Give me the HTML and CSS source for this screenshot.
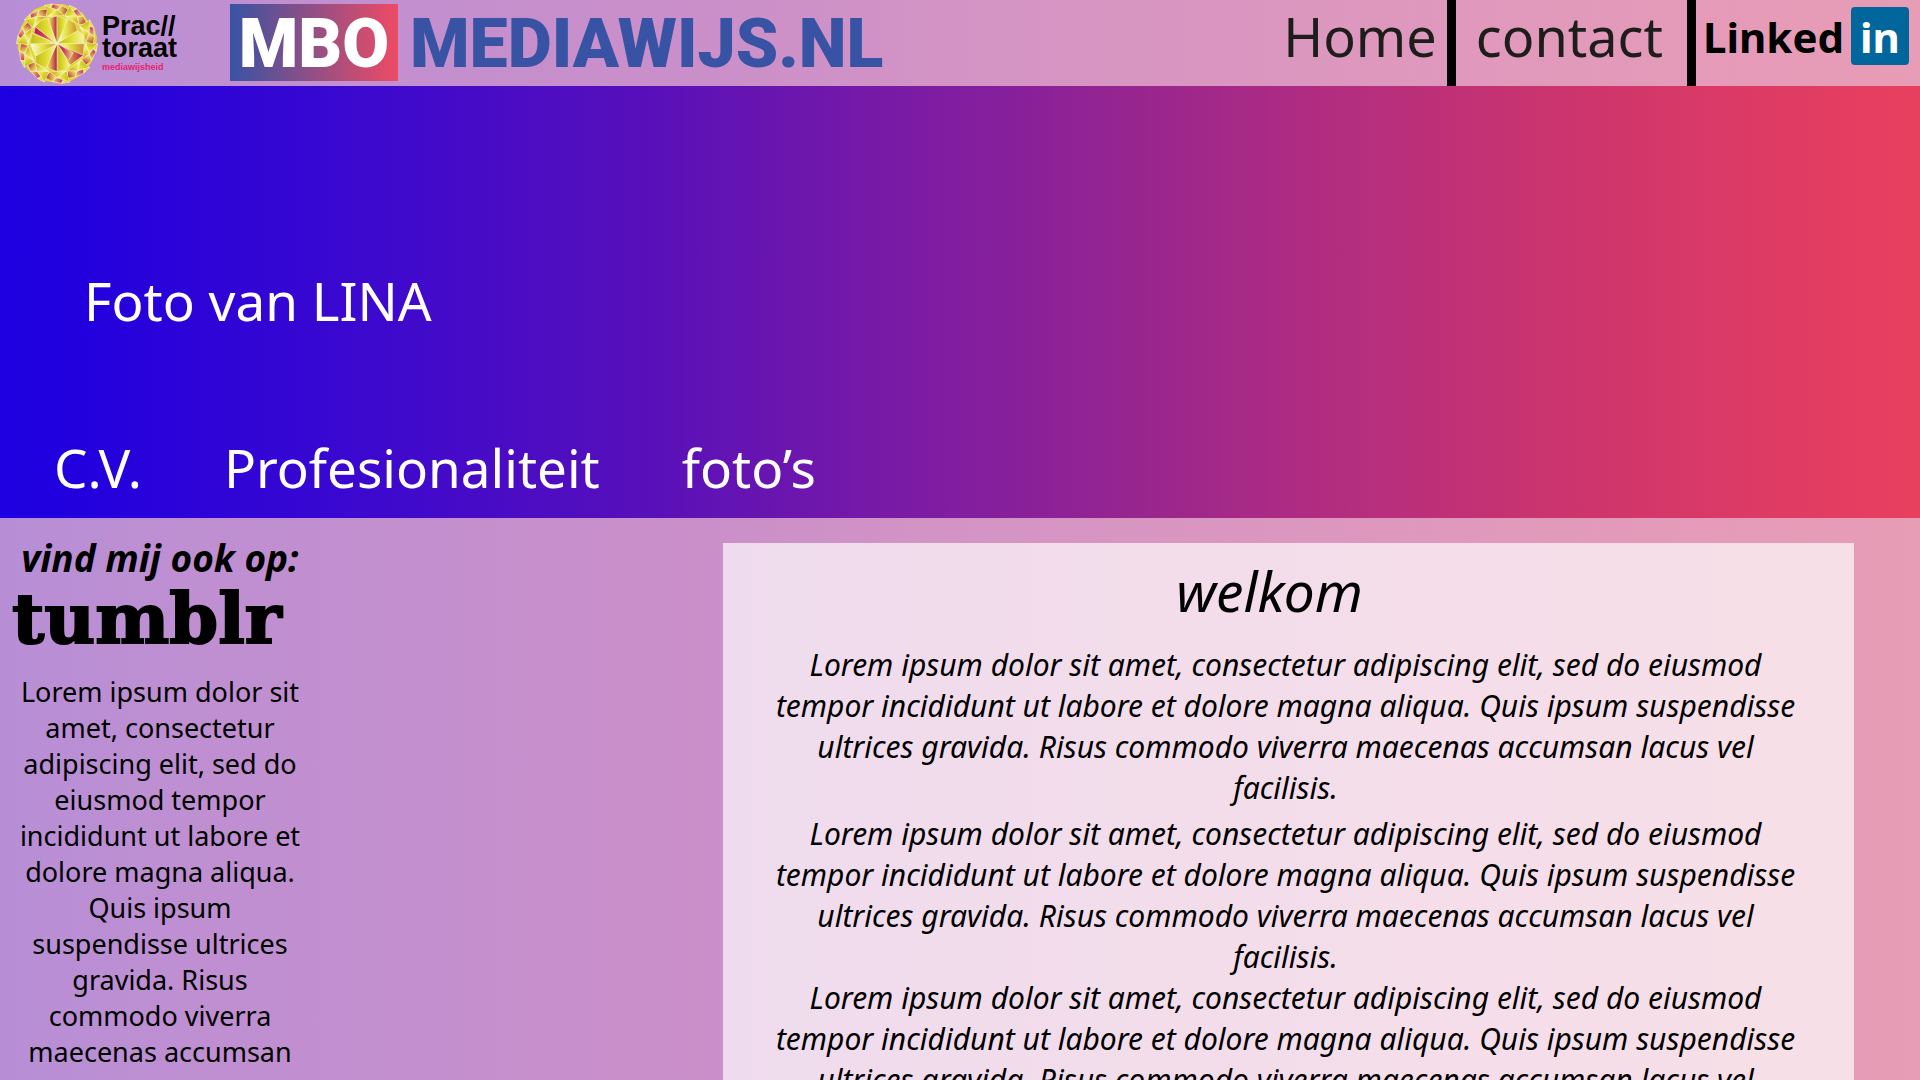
FILE: index.html
```html
<!DOCTYPE html>
<html lang="nl">
<head>
<meta charset="utf-8">
<meta name="viewport" content="width=device-width, initial-scale=1">
<title>MBO Mediawijs</title>
<link rel="stylesheet" href="styles.css">
</head>
<body>
<header class="topbar">
  <a class="practoraat" href="#">
    <svg class="ball" viewBox="0 0 258 258" aria-hidden="true">
      <defs>
        <linearGradient id="gold" x1="0" x2="1"><stop offset="0" stop-color="#c4b81e"/><stop offset=".5" stop-color="#dedb2e"/><stop offset="1" stop-color="#f8f3a8"/></linearGradient>
        <linearGradient id="pale" x1="0" x2="1"><stop offset="0" stop-color="#fffbe0"/><stop offset=".5" stop-color="#e2de3a"/><stop offset="1" stop-color="#cf8a3a"/></linearGradient>
        <linearGradient id="mix" x1="0" x2="1"><stop offset="0" stop-color="#f3ee9a"/><stop offset=".4" stop-color="#dcb040"/><stop offset="1" stop-color="#b8105f"/></linearGradient>
        <linearGradient id="rose" x1="0" x2="1"><stop offset="0" stop-color="#c0125f"/><stop offset=".4" stop-color="#c83a5c"/><stop offset="1" stop-color="#f0dc80"/></linearGradient>
        <g id="rim">
          <path fill="url(#gold)" d="M100 50 92 16 129 29z"/>
          <path fill="url(#rose)" d="M92 16 116 12 145 18 129 29z"/>
          <path fill="url(#pale)" d="M100 50 129 29 150 46z"/>
          <path fill="url(#mix)" d="M129 29 145 18 166 30 150 46z"/>
          <path fill="url(#gold)" d="M92 16 116 12 110 24z"/>
        </g>
      </defs>
      <path fill="#dcd736" d="M92 16 116 11 150 13 180 24 207 40 220 60 241 82 249 112 246 142 238 176 219 208 190 232 164 247 132 250 98 244 66 230 42 210 22 178 11 145 12 110 22 78 40 50 62 28z"/>
      <g stroke="#f9f5c0" stroke-width="1.5" stroke-linejoin="round">
        <use href="#rim"/>
        <use href="#rim" transform="rotate(36 129 131)"/>
        <use href="#rim" transform="rotate(72 129 131)"/>
        <use href="#rim" transform="rotate(108 129 131)"/>
        <use href="#rim" transform="rotate(144 129 131)"/>
        <use href="#rim" transform="rotate(180 129 131)"/>
        <use href="#rim" transform="rotate(216 129 131)"/>
        <use href="#rim" transform="rotate(252 129 131)"/>
        <use href="#rim" transform="rotate(288 129 131)"/>
        <use href="#rim" transform="rotate(324 129 131)"/>
        <path fill="url(#mix)" d="M129 131 101 56 129 48z"/>
        <path fill="url(#gold)" d="M129 131 129 48 162 58z"/>
        <path fill="url(#pale)" d="M129 131 162 58 184 70 190 92z"/>
        <path fill="url(#gold)" d="M129 131 190 92 208 104 210 131z"/>
        <path fill="url(#pale)" d="M129 131 210 131 208 166z"/>
        <path fill="url(#mix)" d="M129 131 208 166 168 196z"/>
        <path fill="url(#rose)" d="M129 131 178 158 164 182z"/>
        <path fill="url(#gold)" d="M129 131 168 196 160 208 129 214z"/>
        <path fill="url(#mix)" d="M129 131 129 214 96 204z"/>
        <path fill="url(#gold)" d="M129 131 96 204 66 190 64 168z"/>
        <path fill="url(#pale)" d="M129 131 64 168 48 131z"/>
        <path fill="url(#gold)" d="M129 131 48 131 54 100z"/>
        <path fill="url(#rose)" d="M129 131 60 100 64 80z"/>
        <path fill="url(#gold)" d="M129 131 64 80 80 62 101 56z"/>
      </g>
    </svg>
    <span class="practoraat-text">
      <span class="practoraat-name">Prac//<br>toraat</span>
      <span class="practoraat-sub">mediawijsheid</span>
    </span>
  </a>
  <a class="mediawijs" href="#"><span class="mbo">MBO</span><span class="site">MEDIAWIJS.NL</span></a>
  <nav class="menu">
    <a class="menu-home" href="#">Home</a>
    <a class="menu-contact" href="#">contact</a>
    <a class="linkedin" href="#">Linked<span class="in">in</span></a>
  </nav>
</header>
<section class="hero">
  <h1 class="hero-title">Foto van LINA</h1>
  <nav class="tabs">
    <a href="#">C.V.</a>
    <a href="#">Profesionaliteit</a>
    <a href="#">foto’s</a>
  </nav>
</section>
<main class="content">
  <aside class="sidebar">
    <h2 class="find">vind mij ook op:</h2>
    <a class="tumblr" href="#">tumblr</a>
    <p class="about">Lorem ipsum dolor sit<br>amet, consectetur<br>adipiscing elit, sed do<br>eiusmod tempor<br>incididunt ut labore et<br>dolore magna aliqua.<br>Quis ipsum<br>suspendisse ultrices<br>gravida. Risus<br>commodo viverra<br>maecenas accumsan</p>
  </aside>
  <article class="panel">
    <h2 class="welcome">welkom</h2>
    <p>Lorem ipsum dolor sit amet, consectetur adipiscing elit, sed do eiusmod<br>tempor incididunt ut labore et dolore magna aliqua. Quis ipsum suspendisse<br>ultrices gravida. Risus commodo viverra maecenas accumsan lacus vel<br>facilisis.</p>
    <p>Lorem ipsum dolor sit amet, consectetur adipiscing elit, sed do eiusmod<br>tempor incididunt ut labore et dolore magna aliqua. Quis ipsum suspendisse<br>ultrices gravida. Risus commodo viverra maecenas accumsan lacus vel<br>facilisis.</p>
    <p>Lorem ipsum dolor sit amet, consectetur adipiscing elit, sed do eiusmod<br>tempor incididunt ut labore et dolore magna aliqua. Quis ipsum suspendisse<br>ultrices gravida. Risus commodo viverra maecenas accumsan lacus vel</p>
  </article>
</main>
</body>
</html>
```
FILE: styles.css
```css
* { box-sizing: border-box; }

body {
  margin: 0;
  height: 100vh;
  overflow: hidden;
  display: flex;
  flex-direction: column;
  font-family: "Noto Sans", "Open Sans", sans-serif;
  color: #000;
  background: linear-gradient(90deg, #b78ed6 0%, #be8fd2 9%, #c98fca 35%, #d293c5 48%, #de98be 72%, #e59bb8 90%, #e79db5 100%);
}

a { color: inherit; text-decoration: none; }
h1, h2, p { margin: 0; font-weight: 400; }

.topbar {
  display: flex;
  flex: none;
  height: 86px;
}

.practoraat {
  display: flex;
  width: 230px;
  padding-left: 14px;
}
.ball { width: 86px; height: 86px; flex: none; }
.practoraat-text {
  display: flex;
  flex-direction: column;
  padding: 15px 0 0 2px;
  font-family: "Liberation Sans", Arial, sans-serif;
  font-weight: 700;
}
.practoraat-name { font-size: 27px; line-height: 22px; }
.practoraat-sub { font-size: 9px; line-height: 16px; color: #e5246f; }

.mediawijs {
  display: flex;
  height: 77px;
  margin-top: 4px;
  gap: 12px;
  font-family: Roboto, sans-serif;
  font-weight: 900;
  font-size: 68px;
  line-height: 80px;
  color: #3853a4;
}
.mbo {
  width: 168px;
  text-align: center;
  color: #fff;
  background: linear-gradient(90deg, #3853a4, #ee4b65);
}

.menu {
  display: flex;
  margin-left: auto;
  padding-right: 11px;
  font-size: 54px;
  line-height: 72px;
  color: #1d1d1b;
}
.menu-home { padding-right: 10px; border-right: 9px solid #000; }
.menu-contact { padding: 0 24px 0 20px; border-right: 9px solid #000; }
.linkedin {
  display: flex;
  gap: 7px;
  padding: 7px 0 0 7px;
  font-weight: 700;
  font-size: 42px;
  line-height: 60px;
  color: #000;
}
.in {
  width: 58px;
  height: 58px;
  border-radius: 4px;
  text-align: center;
  color: #fff;
  background: #00669c;
}

.hero {
  flex: none;
  height: 432px;
  display: flex;
  flex-direction: column;
  justify-content: flex-end;
  color: #fff;
  font-size: 53px;
  line-height: 72px;
  background: linear-gradient(90deg, #1e00e0 0%, #2200de 4%, #3a08d0 18%, #560fbb 33%, #7a1ba5 47%, #97258f 59%, #af2c82 68%, #cb346e 81%, #de3b64 92%, #e83f5e 100%);
}
.hero-title { font-size: inherit; padding-left: 84px; }
.tabs {
  display: flex;
  gap: 82px;
  padding: 95px 0 14px 54px;
}

.content {
  flex: 1;
  min-height: 0;
  display: flex;
  justify-content: space-between;
  align-items: flex-start;
  padding-right: 66px;
}
.sidebar {
  width: 320px;
  padding-top: 20px;
  text-align: center;
}
.find {
  font-size: 37px;
  line-height: 40px;
  font-weight: 700;
  font-style: italic;
}
.tumblr {
  display: block;
  padding-left: 12px;
  text-align: left;
  font-family: "DejaVu Serif", serif;
  font-weight: 700;
  font-size: 70px;
  line-height: 82px;
  -webkit-text-stroke: 2px #000;
}
.about { padding-top: 14px; font-size: 27px; line-height: 36px; }

.panel {
  width: 61%;
  margin-top: 25px;
  padding: 10px 6px 0 0;
  text-align: center;
  font-style: italic;
  font-size: 30px;
  line-height: 41px;
  background: rgba(255, 255, 255, .68);
}
.welcome {
  margin: 0 32px 15px 0;
  font-size: 55px;
  line-height: 76px;
}
.welcome + p { margin-bottom: 5px; }
```
